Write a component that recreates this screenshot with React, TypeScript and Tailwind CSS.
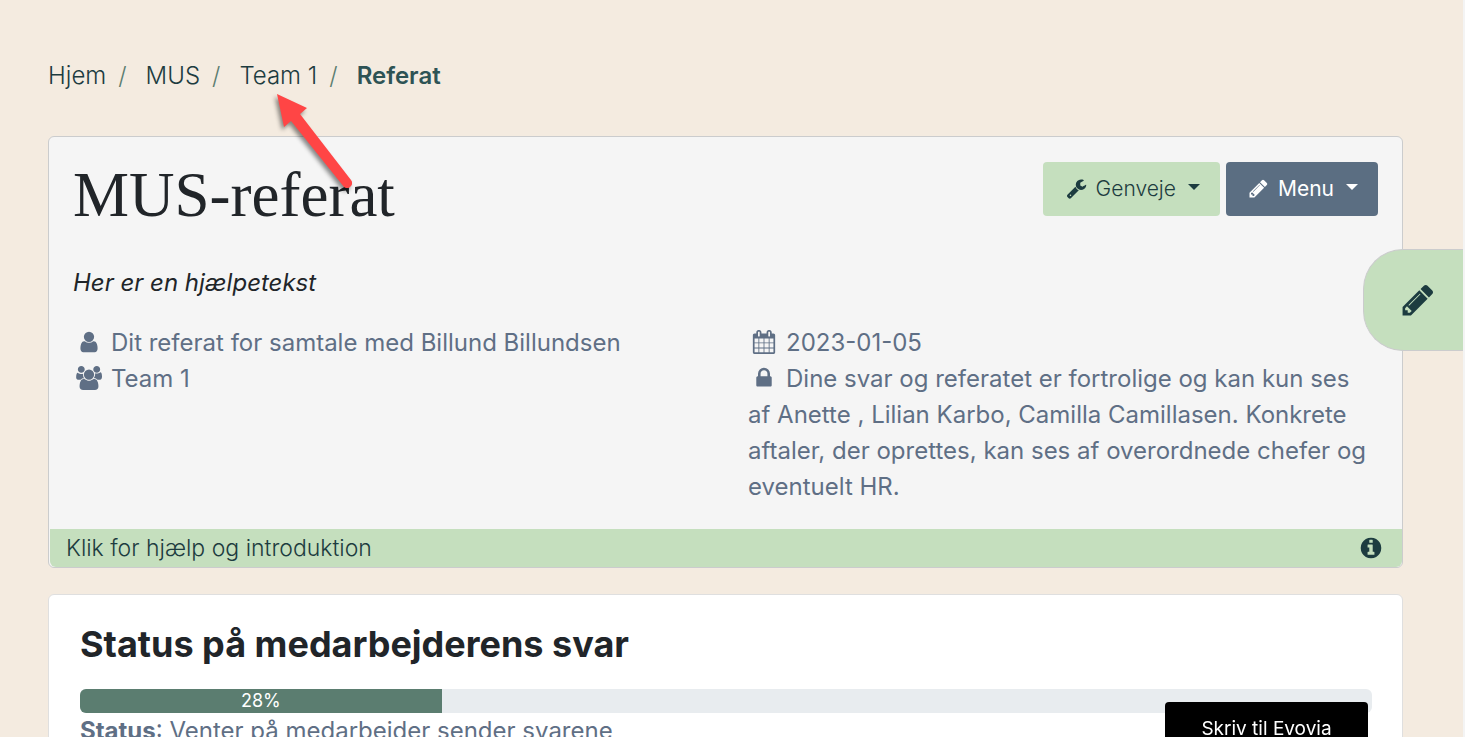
import type { ReactNode } from "react";

// FontAwesome 4 style glyphs, drawn on a 1792 unit grid
const icons = {
  pencil:
    "M491 1536l91-91-235-235-91 91v107h128v128h107zM1014 608q0-22-22-22-10 0-17 7l-542 542q-7 7-7 17 0 22 22 22 10 0 17-7l542-542q7-7 7-17zM960 416l416 416-832 832h-416v-416zM1643 512q0 53-37 90l-166 166-416-416 166-165q36-38 90-38 53 0 91 38l235 234q37 39 37 91z",
  wrench:
    "M448 1472q0-26-19-45t-45-19-45 19-19 45 19 45 45 19 45-19 19-45zM1092 1044l-682 682q-37 37-90 37-52 0-91-37l-106-108q-38-36-38-90 0-53 38-91l681-681q39 98 114.5 173.5t173.5 114.5zM1726 609q0 39-23 106-47 134-164.5 217.5t-258.5 83.5q-185 0-316.5-131.5t-131.5-316.5 131.5-316.5 316.5-131.5q58 0 121.5 16.5t107.5 46.5q16 11 16 28t-16 28l-293 169v224l193 107q5-3 79-48.5t135.5-81 70.5-35.5q15 0 23.5 10t8.5 25z",
  user: "M1536 1399q0 109-62.5 187t-150.5 78h-854q-88 0-150.5-78t-62.5-187q0-85 8.5-160.5t31.5-152 58.5-131 94-89 134.5-34.5q131 128 313 128t313-128q76 0 134.5 34.5t94 89 58.5 131 31.5 152 8.5 160.5zM1280 512q0 159-112.5 271.5t-271.5 112.5-271.5-112.5-112.5-271.5 112.5-271.5 271.5-112.5 271.5 112.5 112.5 271.5z",
  group:
    "M593 896q-162 5-265 128h-134q-82 0-138-40.5t-56-118.5q0-353 124-353 6 0 43.5 21t97.5 42.5 119 21.5q67 0 133-23-5 37-5 66 0 159 93 293zM1664 1533q0 120-73 189.5t-194 69.5h-874q-121 0-194-69.5t-73-189.5q0-53 3.5-103.5t14-109 26.5-108.5 43-97.5 62-81 85.5-53.5 111.5-20q10 0 43 21.5t73 48 107 48 135 21.5 135-21.5 107-48 73-48 43-21.5q61 0 111.5 20t85.5 53.5 62 81 43 97.5 26.5 108.5 14 109 3.5 103.5zM640 256q0 106-75 181t-181 75-181-75-75-181 75-181 181-75 181 75 75 181zM1344 640q0 159-112.5 271.5t-271.5 112.5-271.5-112.5-112.5-271.5 112.5-271.5 271.5-112.5 271.5 112.5 112.5 271.5zM1920 865q0 78-56 118.5t-138 40.5h-134q-103-123-265-128 93-134 93-293 0-29-5-66 66 23 133 23 59 0 119-21.5t97.5-42.5 43.5-21q124 0 124 353zM1792 256q0 106-75 181t-181 75-181-75-75-181 75-181 181-75 181 75 75 181z",
  calendar:
    "M192 1664h288v-288h-288v288zM544 1664h320v-288h-320v288zM192 1312h288v-320h-288v320zM544 1312h320v-320h-320v320zM192 928h288v-288h-288v288zM928 1664h320v-288h-320v288zM544 928h320v-288h-320v288zM1312 1664h288v-288h-288v288zM928 1312h320v-320h-320v320zM576 448v-288q0-13-9.5-22.5t-22.5-9.5h-64q-13 0-22.5 9.5t-9.5 22.5v288q0 13 9.5 22.5t22.5 9.5h64q13 0 22.5-9.5t9.5-22.5zM1312 1312h288v-320h-288v320zM928 928h320v-288h-320v288zM1312 928h288v-288h-288v288zM1344 448v-288q0-13-9.5-22.5t-22.5-9.5h-64q-13 0-22.5 9.5t-9.5 22.5v288q0 13 9.5 22.5t22.5 9.5h64q13 0 22.5-9.5t9.5-22.5zM1728 384v1280q0 52-38 90t-90 38h-1408q-52 0-90-38t-38-90v-1280q0-52 38-90t90-38h128v-96q0-66 47-113t113-47h64q66 0 113 47t47 113v96h384v-96q0-66 47-113t113-47h64q66 0 113 47t47 113v96h128q52 0 90 38t38 90z",
  lock: "M640 768h512v-192q0-106-75-181t-181-75-181 75-75 181v192zM1472 864v576q0 40-28 68t-68 28h-960q-40 0-68-28t-28-68v-576q0-40 28-68t68-28h32v-192q0-184 132-316t316-132 316 132 132 316v192h32q40 0 68 28t28 68z",
  info: "M1152 1376v-160q0-14-9-23t-23-9h-96v-512q0-14-9-23t-23-9h-320q-14 0-23 9t-9 23v160q0 14 9 23t23 9h96v320h-96q-14 0-23 9t-9 23v160q0 14 9 23t23 9h448q14 0 23-9t9-23zM1024 480v-160q0-14-9-23t-23-9h-192q-14 0-23 9t-9 23v160q0 14 9 23t23 9h192q14 0 23-9t9-23zM1664 896q0 209-103 385.5t-279.5 279.5-385.5 103-385.5-103-279.5-279.5-103-385.5 103-385.5 279.5-279.5 385.5-103 385.5 103 279.5 279.5 103 385.5z",
};

function Icon({
  name,
  className,
}: {
  name: keyof typeof icons;
  className: string;
}) {
  return (
    <svg
      viewBox={name === "group" ? "0 0 1920 1792" : "0 0 1792 1792"}
      fill="currentColor"
      aria-hidden="true"
      className={className}
    >
      <path d={icons[name]} />
    </svg>
  );
}

/**
 * A line of meeting information with a fixed width icon in front
 */
function InfoLine({
  icon,
  children,
}: {
  icon: keyof typeof icons;
  children: ReactNode;
}) {
  return (
    <p>
      <span className="mr-[7px] inline-flex w-[31px] justify-center align-[-3px]">
        <Icon
          name={icon}
          className={icon === "group" ? "h-6 w-[26px]" : "size-6"}
        />
      </span>
      {children}
    </p>
  );
}

// Small triangle on the drop-down buttons
function Caret() {
  return (
    <span className="mb-1 ml-3 border-x-6 border-t-6 border-x-transparent border-t-current" />
  );
}

const crumbs = ["Hjem", "MUS", "Team 1"];

export default function App() {
  const progress = 28;

  return (
    <div className="h-screen overflow-hidden border-r-2 border-[#f4f4f4] bg-[#f4ebe0] pr-[60px] pl-12 font-['Inter',sans-serif] text-2xl/9 font-light text-[#212529]">
      {/* Breadcrumb */}
      <nav aria-label="breadcrumb" className="pt-[58px] pb-[42px]">
        <ol className="flex">
          {crumbs.map((crumb) => (
            <li key={crumb} className="flex text-[#1d3c40]">
              <a href="#">{crumb}</a>
              <span className="mr-[19px] ml-3 text-[#5b7d70]">/</span>
            </li>
          ))}
          <li aria-current="page" className="font-semibold text-[#2e5355]">
            Referat
          </li>
        </ol>
      </nav>

      {/* Arrow pointing at the team crumb */}
      <svg
        viewBox="0 0 90 106"
        aria-hidden="true"
        className="absolute top-[90px] left-[270px] z-10 h-[106px] w-[90px] drop-shadow-[-2px_3px_2px_rgba(0,0,0,0.45)]"
      >
        <path
          d="M7 4L37 18L30 24L81 90A5 5 0 0 1 74 97L21 31L14 37Z"
          fill="#ff4545"
        />
      </svg>

      {/* Summary card */}
      <section className="rounded-md border border-[#cbcccd] bg-[#f5f5f5]">
        <div className="px-6 pt-[25px] pb-6">
          <header className="flex items-start justify-between">
            <h1 className="font-['Liberation_Serif',serif] text-[63px]/[66px] font-normal">
              MUS-referat
            </h1>
            <div className="flex gap-1.5 text-[21px]/[30px]">
              <button
                type="button"
                className="flex items-center rounded bg-[#c5dfbe] py-3 pr-5 pl-[23px] text-[#1d3c40]"
              >
                <Icon name="wrench" className="mr-[9px] mb-0.5 size-[21px]" />
                Genveje
                <Caret />
              </button>
              <button
                type="button"
                className="flex items-center rounded bg-[#5b6e82] py-3 pr-5 pl-[22px] font-normal text-white"
              >
                <Icon name="pencil" className="mr-[9px] mb-0.5 size-[21px]" />
                Menu
                <Caret />
              </button>
            </div>
          </header>
          <p className="mt-[37px] font-normal italic">Her er en hjælpetekst</p>
          <div className="mt-6 grid grid-cols-2 gap-[45px] font-normal text-[#5f6f85]">
            <div>
              <InfoLine icon="user">
                Dit referat for samtale med Billund Billundsen
              </InfoLine>
              <InfoLine icon="group">Team 1</InfoLine>
            </div>
            <div>
              <InfoLine icon="calendar">2023-01-05</InfoLine>
              <InfoLine icon="lock">
                Dine svar og referatet er fortrolige og kan kun ses af Anette ,
                Lilian Karbo, Camilla Camillasen. Konkrete aftaler, der
                oprettes, kan ses af overordnede chefer og eventuelt HR.
              </InfoLine>
            </div>
          </div>
        </div>
        <div className="pl-px">
          <button
            type="button"
            className="flex w-full items-center justify-between rounded-b-md bg-[#c5dfbe] px-4 py-px text-left text-[23px]/9 text-[#1d3c40]"
          >
            Klik for hjælp og introduktion
            <Icon name="info" className="mr-[3px] size-6" />
          </button>
        </div>
      </section>

      {/* Status card */}
      <section className="mt-[26px] rounded-md border border-[#dfdfdf] bg-white pt-6 pr-[30px] pb-8 pl-[31px]">
        <h2 className="text-4xl/[50px] font-bold">
          Status på medarbejderens svar
        </h2>
        <div
          role="progressbar"
          aria-label="Status"
          aria-valuenow={progress}
          className="mt-5 h-6 overflow-hidden rounded-md bg-[#e8ecef]"
        >
          <div
            className="h-full bg-[#5b7d70] text-center text-lg/6 font-normal text-white"
            style={{ width: `${progress}%` }}
          >
            {progress}%
          </div>
        </div>
        <p className="font-normal text-[#5f6f85]">
          <strong className="font-bold">Status</strong>: Venter på medarbejder
          sender svarene
        </p>
      </section>

      {/* Floating edit tab */}
      <button
        type="button"
        aria-label="Rediger"
        className="fixed top-[249px] right-0.5 flex h-[102px] w-[100px] items-center justify-center rounded-l-[40px] border border-r-0 border-[#cbcccd] bg-[#c5dfbe] pl-2 text-[#1d3c40]"
      >
        <Icon name="pencil" className="size-9" />
      </button>

      {/* Chat */}
      <button
        type="button"
        className="fixed right-[97px] bottom-0 h-[35px] w-[203px] rounded-t bg-black pt-3 text-[19px]/[30px] font-normal text-white"
      >
        Skriv til Evovia
      </button>
    </div>
  );
}
